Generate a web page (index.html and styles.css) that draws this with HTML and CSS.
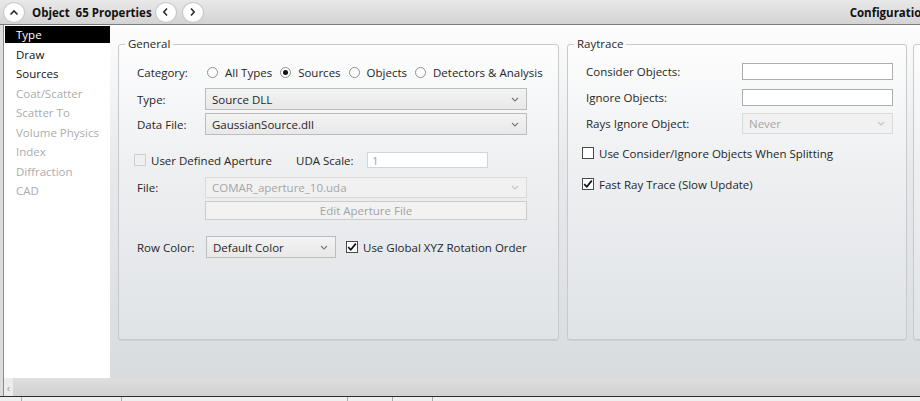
FILE: index.html
```html
<!DOCTYPE html>
<html>
<head>
<meta charset="utf-8">
<link rel="stylesheet" href="styles.css">
</head>
<body>
<div class="window">
  <header class="titlebar">
    <span class="circ first"><svg width="10" height="7" viewBox="0 0 10 7"><polyline points="1.5,5.5 5,2 8.5,5.5" fill="none" stroke="#2a2a2a" stroke-width="1.6"/></svg></span>
    <span class="title">Object&nbsp; 65 Properties</span>
    <span class="circ"><svg width="7" height="10" viewBox="0 0 7 10"><polyline points="5,1.5 1.8,5 5,8.5" fill="none" stroke="#2a2a2a" stroke-width="1.6"/></svg></span>
    <span class="circ"><svg width="7" height="10" viewBox="0 0 7 10"><polyline points="2,1.5 5.2,5 2,8.5" fill="none" stroke="#2a2a2a" stroke-width="1.6"/></svg></span>
    <span class="spacer"></span>
    <span class="title cfg">Configuration</span>
  </header>
  <div class="frame">
    <div class="main">
      <ul class="nav">
        <li class="sel">Type</li>
        <li>Draw</li>
        <li>Sources</li>
        <li class="dis">Coat/Scatter</li>
        <li class="dis">Scatter To</li>
        <li class="dis">Volume Physics</li>
        <li class="dis">Index</li>
        <li class="dis">Diffraction</li>
        <li class="dis">CAD</li>
      </ul>
      <div class="content">
        <fieldset class="group general">
          <legend>General</legend>
          <div class="row r-cat">
            <span class="lbl">Category:</span>
            <span class="radio"><span class="dot"></span></span><span class="rtext">All Types</span>
            <span class="radio on"><span class="dot"></span></span><span class="rtext">Sources</span>
            <span class="radio"><span class="dot"></span></span><span class="rtext">Objects</span>
            <span class="radio"><span class="dot"></span></span><span class="rtext">Detectors &amp; Analysis</span>
          </div>
          <div class="row r-type">
            <span class="lbl">Type:</span>
            <span class="select wide"><span class="val">Source DLL</span><svg class="chev" width="8" height="5" viewBox="0 0 8 5"><polyline points="1,1 4,4 7,1" fill="none" stroke="#7a7a7a" stroke-width="1.1"/></svg></span>
          </div>
          <div class="row r-data">
            <span class="lbl">Data File:</span>
            <span class="select wide"><span class="val">GaussianSource.dll</span><svg class="chev" width="8" height="5" viewBox="0 0 8 5"><polyline points="1,1 4,4 7,1" fill="none" stroke="#7a7a7a" stroke-width="1.1"/></svg></span>
          </div>
          <div class="row r-uda">
            <span class="chkwrap uda-chk"><span class="chk disabled"></span><span class="ctext">User Defined Aperture</span></span>
            <span class="uda-lbl">UDA Scale:</span>
            <span class="input uda-in dis-text">1</span>
          </div>
          <div class="row r-file">
            <span class="lbl">File:</span>
            <span class="select wide disabled"><span class="val">COMAR_aperture_10.uda</span><svg class="chev" width="8" height="5" viewBox="0 0 8 5"><polyline points="1,1 4,4 7,1" fill="none" stroke="#c4c4c4" stroke-width="1.1"/></svg></span>
          </div>
          <div class="row r-btn">
            <span class="lbl"></span>
            <span class="button">Edit Aperture File</span>
          </div>
          <div class="row r-rowc">
            <span class="lbl">Row Color:</span>
            <span class="select narrow"><span class="val">Default Color</span><svg class="chev" width="8" height="5" viewBox="0 0 8 5"><polyline points="1,1 4,4 7,1" fill="none" stroke="#7a7a7a" stroke-width="1.1"/></svg></span>
            <span class="chkwrap glob"><span class="chk on"><svg width="12" height="12" viewBox="0 0 12 12"><polyline points="2.2,6.2 4.8,8.8 9.8,2.6" fill="none" stroke="#111" stroke-width="1.7"/></svg></span><span class="ctext">Use Global XYZ Rotation Order</span></span>
          </div>
        </fieldset>
        <fieldset class="group ray">
          <legend>Raytrace</legend>
          <div class="row r-cons">
            <span class="lbl2">Consider Objects:</span>
            <span class="input rin"></span>
          </div>
          <div class="row r-ign">
            <span class="lbl2">Ignore Objects:</span>
            <span class="input rin"></span>
          </div>
          <div class="row r-rays">
            <span class="lbl2">Rays Ignore Object:</span>
            <span class="select rsel disabled"><span class="val">Never</span><svg class="chev" width="8" height="5" viewBox="0 0 8 5"><polyline points="1,1 4,4 7,1" fill="none" stroke="#c4c4c4" stroke-width="1.1"/></svg></span>
          </div>
          <div class="row r-c1">
            <span class="chkwrap"><span class="chk"></span><span class="ctext">Use Consider/Ignore Objects When Splitting</span></span>
          </div>
          <div class="row r-c2">
            <span class="chkwrap"><span class="chk on"><svg width="12" height="12" viewBox="0 0 12 12"><polyline points="2.2,6.2 4.8,8.8 9.8,2.6" fill="none" stroke="#111" stroke-width="1.7"/></svg></span><span class="ctext">Fast Ray Trace (Slow Update)</span></span>
          </div>
        </fieldset>
        <fieldset class="group third">
          <legend>&nbsp;</legend>
        </fieldset>
      </div>
    </div>
    <div class="hscroll"><span class="sarrow">‹</span></div>
  </div>
  <div class="status">
    <span class="cell w1"></span>
    <span class="cell w2"></span>
    <span class="cell w3"></span>
    <span class="cell w4"></span>
    <span class="cell w5"></span>
    <span class="cell last"></span>
  </div>
</div>
</body>
</html>
```
FILE: styles.css
```css
* { box-sizing: border-box; }
html, body {
  margin: 0;
  padding: 0;
  width: 920px;
  height: 401px;
  overflow: hidden;
  background: #dcdcdc;
  font-family: "Open Sans", "Noto Sans", sans-serif;
  font-size: 11.5px;
  color: #262626;
}
.window {
  width: 920px;
  height: 401px;
  display: flex;
  flex-direction: column;
}
.titlebar {
  height: 25px;
  flex: none;
  display: flex;
  align-items: center;
  padding-left: 3px;
  background: linear-gradient(#e9e9e9, #d3d3d3);
  border-bottom: 1px solid #7c7c7c;
  white-space: nowrap;
}
.circ {
  width: 22px;
  height: 21px;
  border-radius: 50%;
  background: radial-gradient(circle at 50% 40%, #ffffff 55%, #ededed 100%);
  border: 1px solid #c9c9c9;
  display: flex;
  align-items: center;
  justify-content: center;
  margin-right: 5px;
  flex: none;
}
.circ.first { margin-right: 7px; }
.title {
  font-weight: 700;
  font-size: 11.5px;
  color: #111;
  margin-right: 3px;
}
.spacer { flex: 1; }
.title.cfg { margin-right: -9px; }

.frame {
  flex: 1;
  display: flex;
  flex-direction: column;
  margin-left: 3px;
  border-left: 1px solid #8c8c8c;
}
.main {
  height: 353px;
  flex: none;
  display: flex;
}
.nav {
  list-style: none;
  margin: 0;
  padding: 1px 0 0 1px;
  width: 106px;
  flex: none;
  background: #fff;
  font-size: 11.5px;
}
.nav li {
  height: 17px;
  line-height: 17px;
  margin-bottom: 2.5px;
  padding-left: 11px;
  color: #111;
}
.nav li.sel {
  background: #000;
  color: #fff;
}
.nav li.dis { color: #acacac; }

.content {
  flex: 1;
  display: flex;
  align-items: flex-start;
  padding: 11px 0 0 8px;
  gap: 8px;
  background: linear-gradient(#fdfdfd, #e7e9ec 40%, #d9dcdf);
  overflow: hidden;
}
.group {
  margin: 0;
  padding: 0 0 0 18px;
  height: 304px;
  border: 1px solid #c7cacd;
  border-radius: 3px;
  background: linear-gradient(#fdfdfd, #eef0f2 40%, #e0e3e6);
  box-shadow: 0 1px 0 #cdd0d3;
  flex: none;
  min-width: 0;
}
.group legend {
  font-size: 11.5px;
  line-height: 16px;
  padding: 0 3px;
  margin-left: -12px;
  color: #262626;
}
.general { width: 441px; }
.ray { width: 340px; margin-left: 0; }
.third { width: 60px; margin-left: -2px; }

.row {
  display: flex;
  align-items: center;
  white-space: nowrap;
}
.lbl { width: 68px; flex: none; }
.lbl2 { width: 156px; flex: none; }

.r-cat { margin-top: 10px; height: 20px; }
.r-type { margin-top: 6px; height: 22px; }
.r-data { margin-top: 3px; height: 22px; }
.r-uda { margin-top: 17px; height: 16px; }
.r-file { margin-top: 9px; height: 21px; }
.r-btn { margin-top: 3px; height: 19px; }
.r-rowc { margin-top: 16px; height: 22px; }

.radio {
  width: 11px;
  height: 11px;
  border: 1px solid #8e8e8e;
  border-radius: 50%;
  background: #fff;
  display: flex;
  align-items: center;
  justify-content: center;
  flex: none;
  margin-left: 2px;
  margin-right: 7px;
}
.radio .dot { width: 5px; height: 5px; border-radius: 50%; }
.radio.on .dot { background: #111; }
.rtext { margin-right: 6px; }

.select {
  height: 100%;
  display: flex;
  align-items: center;
  justify-content: space-between;
  padding: 0 7px 0 6px;
  border: 1px solid #bcbcbc;
  background: linear-gradient(#f3f3f3, #e8e8e8);
  flex: none;
}
.select.disabled {
  border-color: #dadada;
  background: #f1f1f1;
  color: #a6a6a6;
}
.select.wide { width: 322px; }
.select.narrow { width: 130px; margin-left: 1px; }
.chev { flex: none; }

.input {
  height: 100%;
  border: 1px solid #abadb3;
  background: #fff;
  display: flex;
  align-items: center;
  padding-left: 4px;
}
.dis-text { color: #a6a6a6; border-color: #d4d4d4; }
.uda-in { width: 121px; }
.uda-lbl { width: 71px; flex: none; }
.uda-chk { width: 162px; margin-left: -3px; }

.chkwrap { display: flex; align-items: center; flex: none; }
.chk {
  width: 12px;
  height: 12px;
  border: 1px solid #4a4a4a;
  background: #fff;
  margin-right: 5px;
  flex: none;
  display: flex;
  align-items: center;
  justify-content: center;
}
.chk svg { margin: -1px; }
.chk.disabled { border-color: #cfcfcf; background: #f0f0f0; }
.glob { margin-left: 10px; }

.button {
  width: 322px;
  height: 100%;
  border: 1px solid #cbcbcb;
  background: #f2f2f2;
  color: #a3a3a3;
  display: flex;
  align-items: center;
  justify-content: center;
}

.r-cons { margin-top: 11px; height: 17px; }
.r-ign { margin-top: 9px; height: 17px; }
.r-rays { margin-top: 7px; height: 21px; }
.r-c1 { margin-top: 12px; height: 14px; margin-left: -4px; }
.r-c2 { margin-top: 17px; height: 14px; margin-left: -4px; }
.rin { width: 151px; }
.rsel { width: 151px; }

.hscroll {
  height: 18px;
  flex: none;
  background: linear-gradient(#dedede, #d2d2d2);
  display: flex;
  align-items: center;
}
.sarrow {
  width: 9px;
  height: 100%;
  background: #ececec;
  color: #9a9a9a;
  font-size: 11px;
  display: flex;
  align-items: center;
  justify-content: center;
}
.status {
  flex: 1;
  display: flex;
  border-top: 1px solid #2e2e2e;
  background: #efefef;
}
.cell { height: 100%; border-right: 1px solid #a8a8a8; }
.w1 { width: 22px; }
.w2 { width: 100px; }
.w3 { width: 226px; }
.w4 { width: 45px; }
.w5 { width: 40px; }
.last { flex: 1; border-right: none; }
```
